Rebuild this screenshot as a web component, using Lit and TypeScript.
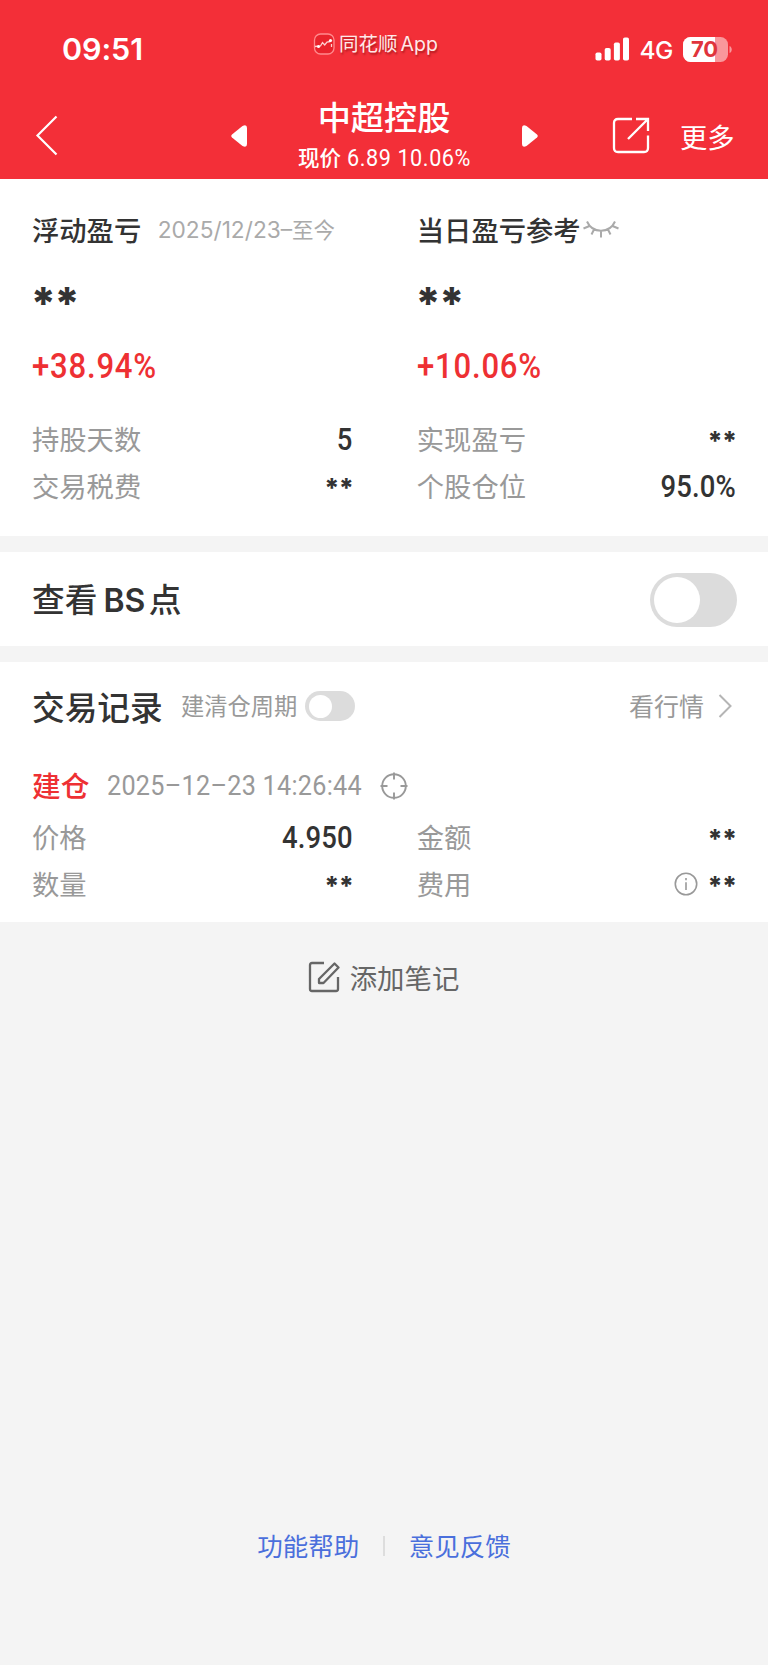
import { LitElement, html, css } from "lit";
import { customElement, property } from "lit/decorators.js";

const base = css`
  :host { box-sizing: border-box; }
  *, *::before { box-sizing: border-box; }
  svg { display: block; flex: none; }
`;

@customElement("toggle-switch")
class ToggleSwitch extends LitElement {
  static styles = [base, css`
    :host { display: flex; flex: none; align-items: center; width: 87px; height: 54px; padding-left: 4px; border-radius: 27px; background: #dcdcdc; }
    .knob { width: 46px; height: 46px; border-radius: 50%; background: #fff; }
    :host([small]) { width: 50px; height: 30px; padding-left: 3.5px; border-radius: 15px; }
    :host([small]) .knob { width: 23px; height: 23px; }
  `];
  render() { return html`<div class="knob"></div>`; }
}

@customElement("status-bar")
class StatusBar extends LitElement {
  static styles = [base, css`
    :host { display: flex; height: 90px; color: #fff; font-family: Inter, "Liberation Sans", sans-serif; white-space: nowrap; }
    .time { width: 251px; padding: 29px 0 0 62px; font-size: 30.5px; line-height: 40px; font-weight: 600; letter-spacing: -0.1px; }
    .app { display: flex; align-items: center; gap: 4px; width: 284px; padding-left: 62px; height: 87px; font: 19.5px/30px "Noto Sans CJK SC", sans-serif; color: #ffe9e9; text-shadow: 1px 2px 2px rgba(90, 0, 0, .45); }
    .latin { font-family: Inter, sans-serif; font-size: 19.5px; margin-left: 3px; }
    .right { display: flex; align-items: center; height: 98px; padding-left: 60px; }
    .net { margin: 1px 0 0 9.500px; width: 43.5px; font-size: 24.500px; font-weight: 500; letter-spacing: -.5px; }
  `];
  render() {
    return html`
      <div class="time">09:51</div>
      <div class="app">
        <svg width="22" height="22" viewBox="0 0 22 22" fill="none">
          <rect x="1.500" y="1" width="19.500" height="20" rx="6" fill="#e9232c" stroke="#ff8a8d" stroke-width="1.300"/>
          <path d="M2 13.500l5.500-.5 2-3.500 2.200 2.500 2.300-3 3.500-.5M18.500 11v3" stroke="#ffd0d0" stroke-width="1.300"/>
          <circle cx="17.500" cy="7.500" r="1.600" fill="#fff"/><circle cx="5.500" cy="13.500" r="1.500" fill="#fff"/>
        </svg>
        <span>同花顺<span class="latin">App</span></span>
      </div>
      <div class="right">
        <svg width="35" height="24" viewBox="0 0 35 24" fill="#fff">
          <rect x="0.500" y="15.500" width="6" height="8" rx="1.800"/><rect x="9.700" y="11" width="6" height="12.500" rx="1.800"/>
          <rect x="18.900" y="5.500" width="6" height="18" rx="1.800"/><rect x="28" y="0.500" width="6" height="23" rx="1.800"/>
        </svg>
        <span class="net">4G</span>
        <svg width="50" height="25" viewBox="0 0 50 25">
          <defs><clipPath id="b"><rect width="45" height="25" rx="7.500"/></clipPath></defs>
          <g clip-path="url(#b)"><rect width="45" height="25" fill="#f9979b"/><rect width="32" height="25" fill="#fff"/></g>
          <path d="M46.500 9v7c3-1 3-6 0-7z" fill="#f9979b"/>
          <text x="8" y="20.200" font-family="Inter, sans-serif" font-size="22" font-weight="700" fill="#e0343c" textLength="27">70</text>
        </svg>
      </div>`;
  }
}

@customElement("nav-bar")
class NavBar extends LitElement {
  static styles = [base, css`
    :host { display: grid; grid-template-columns: 230.500px 307px 230px; height: 89px; color: #fff; font-family: "Noto Sans CJK SC", sans-serif; white-space: nowrap; }
    .back { padding: 24px 0 0 35px; }
    .stock { display: flex; justify-content: space-between; padding-top: 5px; }
    .arrow { margin-top: 29px; }
    .middle { width: 172px; }
    .name { font-size: 33.200px; line-height: 42px; font-weight: 500; text-align: center; }
    .price { padding-top: 3px; font: 500 21.500px/34px "Noto Sans CJK SC", sans-serif; }
    .num { display: inline-block; transform: scaleX(.9); transform-origin: left; font-family: Roboto, sans-serif; font-size: 24px; letter-spacing: .65px; font-weight: 400; margin-left: 6px; }
    .tools { display: flex; padding: 26px 0 0 74px; }
    .more { margin: 0 0 0 30.500px; font-size: 27.300px; line-height: 40px; }
  `];
  render() {
    return html`
      <div class="back"><svg width="24" height="44" viewBox="0 0 24 44" fill="none" stroke="#fff" stroke-width="2.200"><path d="M21.500 2.500 2.500 21.500l19 19"/></svg></div>
      <div class="stock">
        <svg class="arrow" width="16" height="24" viewBox="0 0 16 24" fill="#fff"><path d="M1 10.500 11.500 2Q16 0 16 4v16q0 4-4.500 2L1 13.500Q-.500 12 1 10.500z"/></svg>
        <div class="middle">
          <div class="name">中超控股</div>
          <div class="price">现价<span class="num">6.89 10.06%</span></div>
        </div>
        <svg class="arrow" width="16" height="24" viewBox="0 0 16 24" fill="#fff"><path d="M15 10.500 4.500 2Q0 0 0 4v16q0 4 4.500 2L15 13.500Q16.500 12 15 10.500z"/></svg>
      </div>
      <div class="tools">
        <svg width="38" height="38" viewBox="0 0 38 38" fill="none" stroke="#fff" stroke-width="2.300"><path d="M20 3H6Q2 3 2 7v25q0 4 4 4h26q4 0 4-4V19.500M24 3h12v12M36 3 16 23"/></svg>
        <span class="more">更多</span>
      </div>`;
  }
}

@customElement("data-row")
class DataRow extends LitElement {
  @property() label = "";
  @property() value = "";
  @property({ type: Boolean }) info = false;
  static styles = [base, css`
    :host { display: flex; justify-content: space-between; height: 46.700px; font: 27.300px/46.700px "Noto Sans CJK SC", sans-serif; color: #999; white-space: nowrap; }
    .end { display: flex; align-items: center; height: 48px; }
    .value { color: #333; font: 500 30.500px/48px Roboto, sans-serif; transform: scaleX(.9); transform-origin: right; letter-spacing: .2px; margin: 2px -1px 0 0; }
    .stars { color: #333; font: 800 26px/30px Inter, sans-serif; letter-spacing: -.800px; margin: 4px -1px 0 0; }
    .info { margin: 1px 9.500px 0 0; }
  `];
  render() {
    return html`<span>${this.label}</span><span class="end">
      ${this.info ? html`<svg class="info" width="24" height="24" viewBox="0 0 24 24" fill="none" stroke="#999" stroke-width="1.600"><circle cx="12" cy="12" r="10.700"/><path d="M12 10.200V18M12 6v2.200"/></svg>` : ""}
      <span class=${this.value === "**" ? "stars" : "value"}>${this.value}</span></span>`;
  }
}

@customElement("app-root")
class AppRoot extends LitElement {
  static styles = [base, css`
    :host { display: flex; flex-direction: column; width: 768px; height: 1665px; background: #f4f4f4; color: #333; font-family: "Noto Sans CJK SC", sans-serif; white-space: nowrap; overflow: hidden; }
    .head { height: 179.300px; background: #f32f38; }
    .summary { display: grid; grid-template-columns: 320px 318.500px; column-gap: 64.800px; height: 357px; padding: 28px 0 0 32px; background: #fff; }
    .title { display: flex; align-items: center; height: 44px; font-size: 27.300px; font-weight: 500; }
    .range { margin: 2px 0 0 16.500px; font: 22.700px/44px Inter, "Noto Sans CJK SC", sans-serif; color: #aaa; }
    .cjk { font-size: 21.500px; }
    .eye { margin: 0 0 0 2.500px; }
    .masked { height: 70px; margin-left: -1.500px; padding-top: 24px; font: 800 44px/56px Inter, sans-serif; letter-spacing: -1.900px; }
    .percent { height: 94px; padding-top: 20px; font: 500 34.500px/50px Roboto, sans-serif; letter-spacing: .9px; color: #ee3033; transform: scaleX(.9); transform-origin: left; }
    .pair { display: grid; grid-template-columns: 320px 318.500px; column-gap: 64.800px; }
    .bs { display: flex; align-items: center; justify-content: space-between; height: 94.500px; margin: 15.700px 0; padding: 1px 31px 0 32px; background: #fff; }
    .big { font-size: 32.700px; font-weight: 500; line-height: 48px; }
    .latin { font-family: Inter, sans-serif; font-weight: 600; font-size: 32px; margin: 0 3.500px 0 6px; }
    .records { height: 260px; padding: 20px 0 0 32px; background: #fff; }
    .bar { display: flex; align-items: center; height: 48px; padding-right: 36px; }
    .cycle { margin: -2px 8px 0 18.200px; font-size: 23.300px; color: #999; }
    .quote { margin: -2px 0 0 auto; font-size: 25px; color: #999; }
    .chev { margin-left: 14px; }
    .trade { display: flex; align-items: center; height: 44px; margin: 32px 0 7px; }
    .tag { font-size: 28.700px; font-weight: 500; color: #ee3033; }
    .date { margin: 4px 0 0 17.500px; width: 255px; font: 28px/44px Roboto, sans-serif; transform: scaleX(.9); transform-origin: left; letter-spacing: .3px; color: #999; }
    .cross { margin: 3px 0 0 18px; }
    .note { display: flex; justify-content: center; align-items: center; gap: 10px; height: 44px; margin: 33px 1px 0 0; font-size: 27.400px; color: #666; }
    .links { display: flex; justify-content: center; align-items: center; margin-top: auto; height: 44px; margin-bottom: 99px; font-size: 25.500px; color: #4a6fdc; }
    .sep { width: 1.500px; height: 20px; margin: 3px 24px 0; background: #ddd; }
  `];
  render() {
    return html`
      <div class="head"><status-bar></status-bar><nav-bar></nav-bar></div>
      <div class="summary">
        <div>
          <div class="title">浮动盈亏<span class="range">2025/12/23–<span class="cjk">至今</span></span></div>
          <div class="masked">**</div>
          <div class="percent">+38.94%</div>
          <data-row label="持股天数" value="5"></data-row>
          <data-row label="交易税费" value="**"></data-row>
        </div>
        <div>
          <div class="title">当日盈亏参考<svg class="eye" width="36" height="20" viewBox="0 0 36 20" fill="none" stroke="#aaa" stroke-width="2"><path d="M4 2.500c5.500 12.300 22.500 12.300 28 0M6.500 7 .5 9.500M11 10.500 8.500 15.500M18 12v6.500M25 10.500l2.500 5M29.500 7l6 2.500"/></svg></div>
          <div class="masked">**</div>
          <div class="percent">+10.06%</div>
          <data-row label="实现盈亏" value="**"></data-row>
          <data-row label="个股仓位" value="95.0%"></data-row>
        </div>
      </div>
      <div class="bs"><span class="big">查看<span class="latin">BS</span>点</span><toggle-switch></toggle-switch></div>
      <div class="records">
        <div class="bar">
          <span class="big">交易记录</span><span class="cycle">建清仓周期</span><toggle-switch small></toggle-switch>
          <span class="quote">看行情</span>
          <svg class="chev" width="14" height="24" viewBox="0 0 14 24" fill="none" stroke="#b5b5b5" stroke-width="2"><path d="m1.500 1 11 11-11 11"/></svg>
        </div>
        <div class="trade">
          <span class="tag">建仓</span><span class="date">2025–12–23 14:26:44</span>
          <svg class="cross" width="28" height="28" viewBox="0 0 28 28" fill="none" stroke="#999" stroke-width="1.900"><circle cx="14" cy="14" r="11.800"/><path d="M14 .5v7M14 20.500v7M.5 14h7M20.500 14h7"/></svg>
        </div>
        <div class="pair">
          <data-row label="价格" value="4.950"></data-row><data-row label="金额" value="**"></data-row>
          <data-row label="数量" value="**"></data-row><data-row label="费用" value="**" info></data-row>
        </div>
      </div>
      <div class="note">
        <svg width="32" height="32" viewBox="0 0 32 32" fill="none" stroke="#666" stroke-width="2.300"><path d="M16 2H4Q2 2 2 4v24q0 2 2 2h24q2 0 2-2V16M26.500 2.500 11 18v4h4.500L30.500 6.500z" stroke-linejoin="round"/></svg>
        <span>添加笔记</span>
      </div>
      <div class="links"><span>功能帮助</span><i class="sep"></i><span>意见反馈</span></div>`;
  }
}
